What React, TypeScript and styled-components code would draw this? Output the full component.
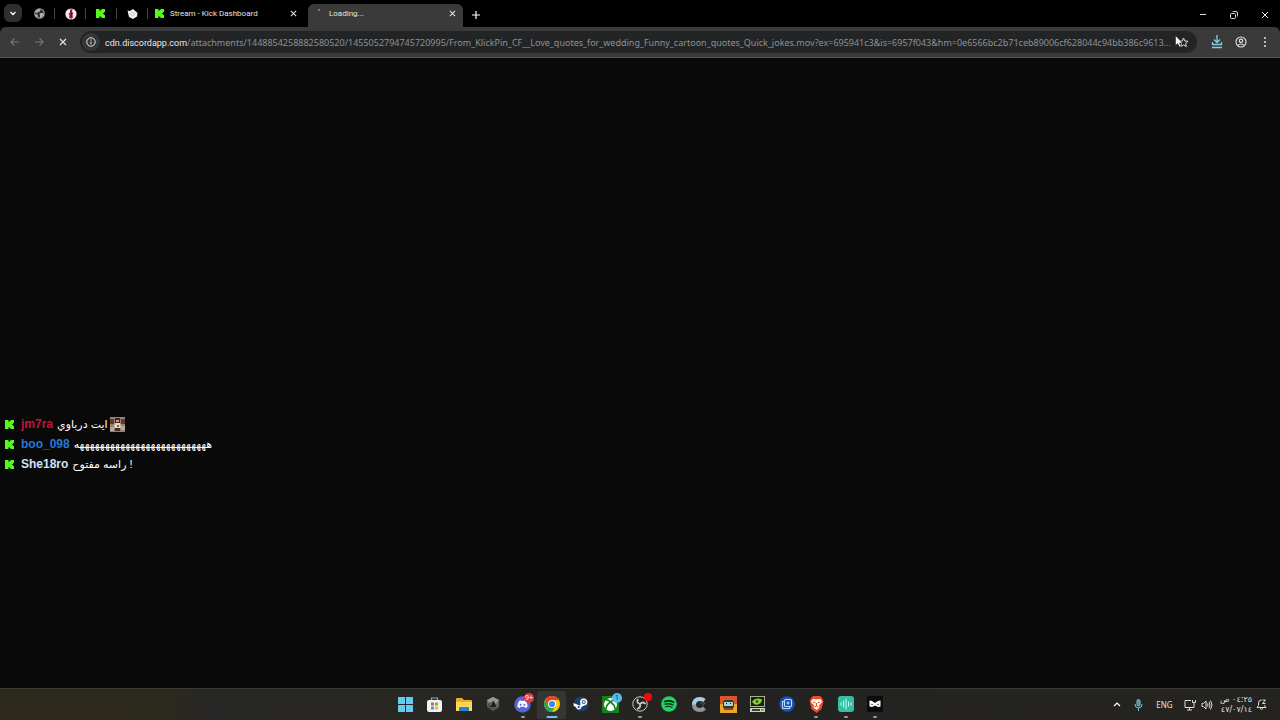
import React from 'react';
import styled, { createGlobalStyle } from 'styled-components';

const Global = createGlobalStyle`
  * { box-sizing: border-box; }
  body { margin: 0; background: #090909; font-family: "Noto Sans", sans-serif; }
  button { border: 0; padding: 0; margin: 0; background: none; color: inherit; font: inherit; }
  svg { display: block; flex: none; }
`;

const Screen = styled.div`
  min-height: 100vh;
  display: flex;
  flex-direction: column;
  color: #e3e3e3;
`;

const TabStrip = styled.header`
  display: flex;
  align-items: flex-end;
  height: 27px;
  background: #000;
`;

const SearchTabs = styled.button`
  width: 18px;
  height: 18px;
  margin: 0 8px 5px 4px;
  border-radius: 6px;
  background: #2f2f2f;
  display: grid;
  place-items: center;
`;

const PinnedTab = styled.button`
  width: 31px;
  height: 27px;
  padding-left: 4px;
  display: flex;
  align-items: center;
  justify-content: space-between;
  &::after { content: ""; width: 1px; height: 11px; background: #444; margin-right: 6px; }
`;

const Tab = styled.div<{ $active?: boolean }>`
  position: relative;
  display: flex;
  align-items: center;
  gap: 6px;
  width: ${p => (p.$active ? 155 : 154)}px;
  height: ${p => (p.$active ? 23 : 27)}px;
  padding: ${p => (p.$active ? '0 6px 4px 7px' : '0 10px 0 1px')};
  border-radius: 6px 6px 0 0;
  background: ${p => (p.$active ? '#3a3a3a' : 'transparent')};
  font-family: Roboto, sans-serif;
  font-size: 8px;
`;

const TabTitle = styled.span`
  flex: 1;
  white-space: nowrap;
`;

const IconButton = styled.button<{ $w?: number; $dim?: boolean }>`
  width: ${p => p.$w ?? 24}px;
  height: 24px;
  display: grid;
  place-items: center;
  flex: none;
  color: ${p => (p.$dim ? '#777' : '#e3e3e3')};
`;

const CloseButton = styled(IconButton)`
  width: 10px;
  height: 10px;
`;

const WindowControls = styled.div`
  display: flex;
  margin-left: auto;
`;

const Toolbar = styled.nav`
  display: flex;
  align-items: center;
  height: 31px;
  padding: 0 3px;
  background: #3a3a3a;
  border-bottom: 1px solid #555;
  border-radius: 6px 6px 0 0;
`;

const AddressBar = styled.div`
  display: flex;
  align-items: center;
  flex: 1;
  min-width: 0;
  height: 22px;
  margin: 0 8px 0 5px;
  padding: 0 2px;
  border-radius: 11px;
  background: #222426;
`;

const SiteInfo = styled.button`
  width: 18px;
  height: 18px;
  margin-right: 5px;
  border-radius: 9px;
  background: #353638;
  display: grid;
  place-items: center;
  flex: none;
`;

const Address = styled.a`
  flex: 1;
  min-width: 0;
  overflow: hidden;
  text-overflow: ellipsis;
  white-space: nowrap;
  font-size: 9px;
  color: #8f9193;
  text-decoration: none;
`;

const Host = styled.span`
  font-family: Roboto, sans-serif;
  color: #e8e8e8;
`;

const BookmarkArea = styled.div`
  position: relative;
  margin-right: 3px;
`;

const Pointer = styled.svg`
  position: absolute;
  left: 1px;
  top: 5px;
`;

const Page = styled.main`
  flex: 1;
  display: flex;
  flex-direction: column;
  justify-content: flex-end;
`;

const Chat = styled.ul`
  list-style: none;
  margin: 0 0 214px;
  padding: 0 5px;
`;

const Message = styled.li`
  display: flex;
  align-items: center;
  height: 20px;
  font-family: "Liberation Sans", "DejaVu Sans", sans-serif;
  font-size: 12px;
`;

const Author = styled.b<{ $color: string }>`
  margin: 0 4px 0 7px;
  color: ${p => p.$color};
`;

const Words = styled.span`
  color: #fff;
  font-size: 11px;
  margin-right: 2px;
  white-space: nowrap;
`;

const Taskbar = styled.footer`
  display: flex;
  align-items: center;
  height: 32px;
  border-top: 1px solid #3a3a34;
  background: linear-gradient(90deg, #2d2a1c 0, #2c291d 12%, #262626 17%, #292722 30%, #262420 50%, #222 60%, #252420 80%, #24231f 100%);
`;

const Side = styled.div`
  flex: 1;
  display: flex;
  justify-content: flex-end;
  align-items: center;
`;

const Apps = styled.div`
  display: flex;
  justify-content: space-between;
  width: 499px;
`;

const AppButton = styled.button<{ $active?: boolean; $running?: boolean }>`
  position: relative;
  width: 29px;
  height: 28px;
  padding-bottom: 1px;
  display: grid;
  place-items: center;
  border-radius: 3px;
  background: ${p => (p.$active ? '#353533' : 'transparent')};
  &::after {
    content: "";
    position: absolute;
    bottom: 1px;
    left: 50%;
    transform: translateX(-50%);
    height: 2px;
    border-radius: 1px;
    width: ${p => (p.$active ? 11 : p.$running ? 4 : 0)}px;
    background: ${p => (p.$active ? '#65c3f3' : '#999')};
  }
`;

const Badge = styled.span<{ $bg: string; $fg?: string; $size?: number }>`
  position: absolute;
  top: 2px;
  right: 3px;
  min-width: ${p => p.$size ?? 10}px;
  height: ${p => p.$size ?? 10}px;
  border-radius: 5px;
  background: ${p => p.$bg};
  color: ${p => p.$fg ?? '#fff'};
  font-size: 7px;
  line-height: 10px;
`;

const Tray = styled.div`
  display: flex;
  align-items: center;
  padding-right: 12px;
`;

const Language = styled.button`
  width: 25px;
  margin: 0 4px 0 5px;
  font-size: 8px;
`;

const Clock = styled.time`
  display: flex;
  flex-direction: column;
  align-items: flex-end;
  width: 38px;
  margin-right: 2px;
  font-family: "DejaVu Sans", sans-serif;
  font-size: 8px;
  line-height: 10px;
  white-space: nowrap;
`;

const Kick = () => (
  <svg width="9" height="9" viewBox="0 0 9 9" fill="#53fc18">
    <path d="M0 0h3.500v1.800h1V1h1V0H9v3H8v1h-.8v1H8v1h1v3H5.500V8h-1V7.200h-1V9H0z" />
  </svg>
);

const Cross = ({ size = 8, w = 1.2 }: { size?: number; w?: number }) => (
  <svg width={size} height={size} viewBox="0 0 8 8" stroke="currentColor" strokeWidth={w} fill="none"><path d="M1 1l6 6M7 1L1 7" /></svg>
);

const Arrow = ({ flip }: { flip?: boolean }) => (
  <svg width="10" height="10" viewBox="0 0 10 10" stroke="currentColor" strokeWidth="1.1" fill="none">
    <path d={flip ? 'M1 5h8M5.5 1.3L9 5 5.5 8.7' : 'M9 5H1M4.5 1.3L1 5l3.500 3.700'} />
  </svg>
);

const Globe = () => (
  <svg width="11" height="11" viewBox="0 0 10 10">
    <circle cx="5" cy="5" r="4.300" fill="#2b2b2b" stroke="#a9a9a9" />
    <path d="M1 3.500L4 1l2 .3-.6 1.800-2 .6-.2 1.200zM5 5l3-.6L9 5.500 7 8.500 5 9l.6-2zM1 5.500l2 .5 1 2.500-2-.8z" fill="#b4b4b4" />
  </svg>
);

const RedDial = () => (
  <svg width="12" height="12" viewBox="0 0 12 12">
    <circle cx="6" cy="6" r="5.600" fill="#f3eeee" />
    <path d="M5 1.500l2.500-.5L7 4l1.500 1L7.500 6.500l.5 3L6 11 4 9.500l.5-2L3.500 6 5 4.500z" fill="#9b2238" />
    <path d="M6.500 4v5" stroke="#521020" />
  </svg>
);

const WhiteTag = () => (
  <svg width="11" height="12" viewBox="0 0 11 12">
    <path d="M.5 2.500L3 3l3-2 4.500 4L10 8.500 6 11 2 9z" fill="#f2f2f2" />
    <path d="M5.500 4L8 6 5.500 8 3.500 6z" fill="none" stroke="#aaa" strokeWidth=".6" />
  </svg>
);

const Emote = () => (
  <svg width="15" height="15" viewBox="0 0 15 15" role="img" aria-label="emote">
    <path fill="#9a7f78" d="M0 0h15v15H0z" />
    <path fill="#5d3935" d="M0 2h4v5H0zM11 2h4v5h-4z" />
    <path fill="#b9a59c" d="M0 10h4v4H0zM11 9h4v4h-4z" />
    <path fill="#3c2420" d="M5 1h5v5H5z" />
    <path fill="#c99a80" d="M6 3h3v2H6z" />
    <path fill="#e2dac4" d="M5 6h5l1 4-1 1H5l-1-1z" />
    <path fill="#8a5a44" d="M7 8h2v2H7z" />
    <path fill="#3d302b" d="M5 11h5v3H5z" />
  </svg>
);

const Windows = () => (
  <svg width="17" height="17" viewBox="0 0 17 17" fill="#62cbf3"><path d="M1 1h7v7H1zM9 1h7v7H9zM1 9h7v7H1zM9 9h7v7H9z" /></svg>
);
const Store = () => (
  <svg width="17" height="17" viewBox="0 0 17 17">
    <path d="M5.500 5V2h6v3" fill="none" stroke="#5eb9e8" strokeWidth="1.200" />
    <rect x="1" y="4" width="15" height="12" rx="2" fill="#f1f1f1" />
    <path d="M5 6.500h3v3H5z" fill="#ef5b30" /><path d="M9 6.500h3v3H9z" fill="#7cb928" />
    <path d="M5 10.500h3v3H5z" fill="#23a5e8" /><path d="M9 10.500h3v3H9z" fill="#f8b91c" />
  </svg>
);
const Folder = () => (
  <svg width="18" height="17" viewBox="0 0 18 17">
    <path d="M1 3q0-1 1-1h5l2 2h7q1 0 1 1v10H1z" fill="#e9ae24" />
    <path d="M1 6h16v8q0 1-1 1H2q-1 0-1-1z" fill="#ffd65a" />
    <path d="M4 15v-3q0-1 1-1h8q1 0 1 1v3z" fill="#2383cf" />
  </svg>
);
const GreyHex = () => (
  <svg width="16" height="16" viewBox="0 0 16 16">
    <path d="M8 1l6 3v7l-6 4-6-4V4z" fill="#64676a" />
    <path d="M2 4l6-3 6 3-3 4-3-3-4 2z" fill="#94989b" />
    <path d="M2 10l3-4 1 5 5 1-3 3z" fill="#4b4f52" />
    <path d="M8.500 4.500l3 6.500H5.500z" fill="#1b1d1e" />
  </svg>
);
const Discord = () => (
  <svg width="17" height="17" viewBox="0 0 17 17">
    <circle cx="8.500" cy="8.500" r="8.200" fill="#5865d8" />
    <path d="M5 5l2-.7.4.8h2.200l.4-.8 2 .7q1.800 3 1.500 6l-2.300 1-.7-1.200h-4L5.800 12l-2.300-1Q3.200 8 5 5z" fill="#fff" />
    <circle cx="6.600" cy="8.700" r="1" fill="#5865d8" /><circle cx="10.400" cy="8.700" r="1" fill="#5865d8" />
  </svg>
);
const Chrome = () => (
  <svg width="16" height="16" viewBox="0 0 16 16">
    <circle cx="8" cy="8" r="8" fill="#f8c915" />
    <path d="M1.070 4A8 8 0 0 1 14.930 4H8L4.500 10z" fill="#e64335" />
    <path d="M1.070 4A8 8 0 0 0 8 16l3.500-6H4.540z" fill="#2fa34f" />
    <circle cx="8" cy="8" r="4" fill="#fff" /><circle cx="8" cy="8" r="3.100" fill="#4285f4" />
  </svg>
);
const Steam = () => (
  <svg width="16" height="16" viewBox="0 0 16 16">
    <circle cx="8" cy="8" r="7.500" fill="#17406f" />
    <path d="M.5 7l6 2.500L9 7l3.500 1.500-4 2.500Q8 13.500 5.500 13.500 3.500 13 3 11L.7 10z" fill="#fff" />
    <circle cx="10.700" cy="6" r="3.600" fill="#fff" /><circle cx="10.700" cy="6" r="2" fill="#17406f" />
    <circle cx="10.700" cy="6" r="1.200" fill="#dfe8f2" /><circle cx="5.700" cy="11" r="1.100" fill="#17406f" />
  </svg>
);
const Xbox = () => (
  <svg width="17" height="17" viewBox="0 0 17 17">
    <path d="M0 0h17v17H0z" fill="#16811c" /><circle cx="8.500" cy="8.500" r="6.500" fill="#fff" />
    <path d="M4 4q2-.5 4.500 2Q11 3.500 13 4M8.500 6Q4 9 4 13M8.500 6q4.500 3 4.500 7" stroke="#16811c" strokeWidth="1.600" fill="none" />
  </svg>
);
const Obs = () => (
  <svg width="16" height="16" viewBox="0 0 16 16" fill="none" stroke="#c7c7c7">
    <circle cx="8" cy="8" r="7.200" fill="#242424" />
    <path d="M8 8q-4-1-2-5M8 8q3-3 5.500 0M8 8q1 4-3 5" strokeWidth="1.800" />
  </svg>
);
const Spotify = () => (
  <svg width="16" height="16" viewBox="0 0 16 16" fill="none" stroke="#142519" strokeLinecap="round">
    <circle cx="8" cy="8" r="7.800" fill="#24d366" stroke="none" />
    <path d="M3.500 5.500q5-1.500 9.200.8" strokeWidth="1.600" /><path d="M4 8.200q4.300-1.200 7.900.7" strokeWidth="1.300" /><path d="M4.500 10.700q3.500-1 6.500.6" strokeWidth="1.100" />
  </svg>
);
const BigC = () => (
  <svg width="16" height="17" viewBox="0 0 16 17" fill="none" strokeWidth="4">
    <path d="M3 9Q3 3 9 3q2.500 0 4.500 1.500" stroke="#a5cfe7" /><path d="M3 8.500Q3 14 9 14q2.500 0 4.500-2" stroke="#8b969d" />
    <path d="M9 7h5l-3 3" stroke="#4f5c63" strokeWidth="1" />
  </svg>
);
const Robot = () => (
  <svg width="17" height="17" viewBox="0 0 17 17">
    <path d="M0 0h17v9H0z" fill="#d9552a" /><path d="M0 8h17v9H0z" fill="#eba42c" />
    <rect x="3" y="4" width="11" height="9" rx="3" fill="#403029" /><path d="M4 6h9v4H4z" fill="#9ed7cf" /><path d="M6 7h1v1H6zM10 7h1v1h-1z" fill="#111" />
    <path d="M4 12h9v2H4z" fill="#804823" />
  </svg>
);
const Gpu = () => (
  <svg width="17" height="17" viewBox="0 0 17 17">
    <path d="M1 0h15v11H1z" fill="#a7b099" /><path d="M2 1h13v9H2z" fill="#17240d" />
    <path d="M3 5.500q4-5 10-2-1 6-7 5-2-1-3-3z" fill="#8dd12a" /><circle cx="8" cy="5.500" r="1.300" fill="#2b4a10" />
    <path d="M1 12h15v4H1z" fill="#ccd1c8" /><path d="M3 13h8v2H3z" fill="#39432e" /><path d="M12 13h3v2h-3z" fill="#69b229" />
  </svg>
);
const BlueChip = () => (
  <svg width="16" height="16" viewBox="0 0 16 16" fill="none" stroke="#bcd8ff" strokeWidth="1.100">
    <circle cx="8" cy="8" r="7.700" fill="#1854b4" stroke="none" />
    <rect x="5.500" y="3.500" width="7" height="7" rx="1" /><path d="M5.500 5.500h-2v6q0 1 1 1h6v-2M9 5.500v3M10.500 7h-3" />
  </svg>
);
const Brave = () => (
  <svg width="15" height="17" viewBox="0 0 15 17">
    <path d="M4 0h7l2 2 1.500 3-2 8-5 4-5-4-2-8L2 2z" fill="#ef4a27" />
    <path d="M3 3.500l2-.4 2.500.4 2.500-.4 2 .4 1 2.500-3 3.500.5 2L7.500 14l-3-2.500.5-2L2 6z" fill="#fff" />
    <path d="M4 6l2.500 1M11 6L8.500 7M7.500 7v3M5.500 11l2-1 2 1" stroke="#ef4a27" fill="none" />
  </svg>
);
const Wave = () => (
  <svg width="16" height="16" viewBox="0 0 16 16">
    <rect width="16" height="16" rx="3" fill="#34bfa0" />
    <path d="M3 6.500v3M5.500 4.500v7M8 2.500v11M10.500 5.500v5M13 6.500v3" stroke="#d9fff5" strokeWidth="1" />
  </svg>
);
const BlackMask = () => (
  <svg width="16" height="16" viewBox="0 0 16 16">
    <rect width="16" height="16" rx="1" fill="#0c0c0c" />
    <path d="M2.500 4.500L5 5l3 2 3-2 2.500-.5v6L11 11 8 9.500 5 11l-2.500-.5z" fill="#fff" />
    <path d="M4.500 7.500v1.500l1.800-.6zM11.500 7.500v1.500l-1.800-.6z" fill="#0c0c0c" />
  </svg>
);

type Entry = { name: string; icon: React.ReactNode; active?: boolean; running?: boolean; badge?: React.ReactNode };
const apps: Entry[] = [
  { name: 'Start', icon: <Windows /> },
  { name: 'Microsoft Store', icon: <Store /> },
  { name: 'File Explorer', icon: <Folder /> },
  { name: 'Launcher', icon: <GreyHex /> },
  { name: 'Discord', icon: <Discord />, running: true, badge: <Badge $bg="#d83b48">9+</Badge> },
  { name: 'Chrome', icon: <Chrome />, active: true },
  { name: 'Steam', icon: <Steam /> },
  { name: 'Xbox', icon: <Xbox />, badge: <Badge $bg="#55bdf0" $fg="#123">1</Badge> },
  { name: 'OBS', icon: <Obs />, running: true, badge: <Badge $bg="#ef0b0b" $size={8} /> },
  { name: 'Spotify', icon: <Spotify /> },
  { name: 'Cleaner', icon: <BigC /> },
  { name: 'Game', icon: <Robot /> },
  { name: 'Graphics', icon: <Gpu /> },
  { name: 'Devices', icon: <BlueChip /> },
  { name: 'Brave', icon: <Brave />, running: true },
  { name: 'Audio', icon: <Wave />, running: true },
  { name: 'Editor', icon: <BlackMask />, running: true },
];

const messages = [
  { author: 'jm7ra', color: '#c8103f', text: 'ايت درباوي', emote: true },
  { author: 'boo_098', color: '#2577d8', text: 'ه'.repeat(27) },
  { author: 'She18ro', color: '#cfe3fa', text: 'راسه مفتوح !' },
];

export default function App() {
  return (
    <Screen>
      <Global />
      <TabStrip>
        <SearchTabs aria-label="Search tabs">
          <svg width="6" height="5" viewBox="0 0 6 5" fill="none" stroke="#fff" strokeWidth="1.300"><path d="M.5 1L3 3.500 5.500 1" /></svg>
        </SearchTabs>
        <PinnedTab aria-label="Globe"><Globe /></PinnedTab>
        <PinnedTab aria-label="Panel"><RedDial /></PinnedTab>
        <PinnedTab aria-label="Kick"><Kick /></PinnedTab>
        <PinnedTab aria-label="Tag"><WhiteTag /></PinnedTab>
        <Tab>
          <Kick />
          <TabTitle>Stream - Kick Dashboard</TabTitle>
          <CloseButton aria-label="Close tab"><Cross size={7} /></CloseButton>
        </Tab>
        <Tab $active>
          <svg width="8" height="10" viewBox="0 0 8 10"><path d="M3 1h2" stroke="#9ecdd0" /></svg>
          <TabTitle>Loading...</TabTitle>
          <CloseButton aria-label="Close tab"><Cross size={7} /></CloseButton>
        </Tab>
        <IconButton $w={26} aria-label="New tab">
          <svg width="8" height="8" viewBox="0 0 8 8" stroke="#fff" strokeWidth="1.200"><path d="M4 0v8M0 4h8" /></svg>
        </IconButton>
        <WindowControls>
          <IconButton $w={31} aria-label="Minimize"><svg width="8" height="8" viewBox="0 0 8 8" stroke="#ddd"><path d="M1 3.500h6" /></svg></IconButton>
          <IconButton $w={31} aria-label="Restore">
            <svg width="8" height="8" viewBox="0 0 8 8" stroke="#ddd" fill="none"><rect x=".5" y="2.500" width="5" height="5" rx="1" /><path d="M2.500 1q0-.5 1-.5H6q1.500 0 1.500 1.500v2.500q0 1-.5 1" /></svg>
          </IconButton>
          <IconButton $w={31} aria-label="Close"><Cross w={1} /></IconButton>
        </WindowControls>
      </TabStrip>
      <Toolbar>
        <IconButton $dim aria-label="Back"><Arrow /></IconButton>
        <IconButton $dim aria-label="Forward"><Arrow flip /></IconButton>
        <IconButton aria-label="Stop"><Cross /></IconButton>
        <AddressBar>
          <SiteInfo aria-label="Site information">
            <svg width="10" height="10" viewBox="0 0 10 10" fill="none" stroke="#e3e3e3"><circle cx="5" cy="5" r="4.200" /><path d="M5 4.500V7.300M5 2.500v1.100" /></svg>
          </SiteInfo>
          <Address href="#">
            <Host>cdn.discordapp.com</Host>/attachments/1448854258882580520/1455052794745720995/From_KlickPin_CF__Love_quotes_for_wedding_Funny_cartoon_quotes_Quick_jokes.mov?ex=695941c3&amp;is=6957f043&amp;hm=0e6566bc2b71ceb89006cf628044c94bb386c9613...
          </Address>
          <BookmarkArea>
            <IconButton $w={18} aria-label="Bookmark">
              <svg width="11" height="11" viewBox="0 0 11 11" fill="none" stroke="#ddd"><path d="M5.500 1l1.300 3 3.200.3-2.400 2.100.7 3.200-2.800-1.700-2.800 1.700.7-3.200L1 4.300 4.200 4z" /></svg>
            </IconButton>
            <Pointer width="8" height="13" viewBox="0 0 8 13"><path d="M.5.5v10l2.300-2L4.300 12l1.700-.8-1.500-3.200h3z" fill="#fff" stroke="#111" strokeWidth=".5" /></Pointer>
          </BookmarkArea>
        </AddressBar>
        <IconButton aria-label="Downloads">
          <svg width="12" height="14" viewBox="0 0 12 14" fill="none" stroke="#7fd0dc" strokeWidth="1.300"><path d="M6 0v7M3 4.500l3 3 3-3M1.500 7v2.500h9V7M1 12.500h10" /></svg>
        </IconButton>
        <IconButton aria-label="Profile">
          <svg width="12" height="12" viewBox="0 0 12 12" fill="none" stroke="#e3e3e3" strokeWidth="1.100"><circle cx="6" cy="6" r="5" /><circle cx="6" cy="4.800" r="1.700" /><path d="M2.700 9.500Q6 6.500 9.300 9.500" /></svg>
        </IconButton>
        <IconButton aria-label="Menu">
          <svg width="4" height="12" viewBox="0 0 4 12" fill="#e3e3e3"><circle cx="2" cy="2" r="1" /><circle cx="2" cy="6" r="1" /><circle cx="2" cy="10" r="1" /></svg>
        </IconButton>
      </Toolbar>
      <Page>
        <Chat>
          {messages.map(m => (
            <Message key={m.author}>
              <Kick />
              <Author $color={m.color}>{m.author}</Author>
              <Words>{m.text}</Words>
              {m.emote && <Emote />}
            </Message>
          ))}
        </Chat>
      </Page>
      <Taskbar>
        <Side />
        <Apps>
          {apps.map(a => (
            <AppButton key={a.name} aria-label={a.name} $active={a.active} $running={a.running}>
              {a.icon}
              {a.badge}
            </AppButton>
          ))}
        </Apps>
        <Side>
          <Tray>
            <IconButton aria-label="Show hidden icons"><svg width="8" height="5" viewBox="0 0 8 5" fill="none" stroke="#fff" strokeWidth="1.200"><path d="M1 4l3-3 3 3" /></svg></IconButton>
            <IconButton $w={18} aria-label="Microphone">
              <svg width="9" height="12" viewBox="0 0 9 12" fill="none" stroke="#79c7d2"><rect x="3" y=".5" width="3" height="6.500" rx="1.500" fill="#4c8c96" /><path d="M1 5q0 4 3.500 4T8 5M4.500 9v3" /></svg>
            </IconButton>
            <Language>ENG</Language>
            <IconButton $w={18} aria-label="Network">
              <svg width="12" height="12" viewBox="0 0 12 12" fill="none" stroke="#ddd"><path d="M7 1.500H1v7h9V6M3 11h5M5.500 8.500V11M8.500 1v2.500h3V1M10 3.500V6" /></svg>
            </IconButton>
            <IconButton $w={15} aria-label="Volume">
              <svg width="12" height="12" viewBox="0 0 12 12" fill="none" stroke="#ddd"><path d="M1 4.500h1.500L5 2v8L2.500 7.500H1zM6.500 4.500q1 1.500 0 3M8 3q2 3 0 6M9.500 1.500q3 4.500 0 9" /></svg>
            </IconButton>
            <Clock><span dir="rtl">٠٤:٢٥ ص</span><span>٤٧/٠٧/١٤</span></Clock>
            <IconButton $w={14} aria-label="Notifications">
              <svg width="11" height="11" viewBox="0 0 11 11" fill="none" stroke="#ddd"><path d="M5.500 1Q2.500 1 2.500 4v2.500L1 8.500h9L8.500 6.500V6M4 9.500q1.500 1.500 3 0M6.500 1h3l-3 3.500h3" /></svg>
            </IconButton>
          </Tray>
        </Side>
      </Taskbar>
    </Screen>
  );
}
